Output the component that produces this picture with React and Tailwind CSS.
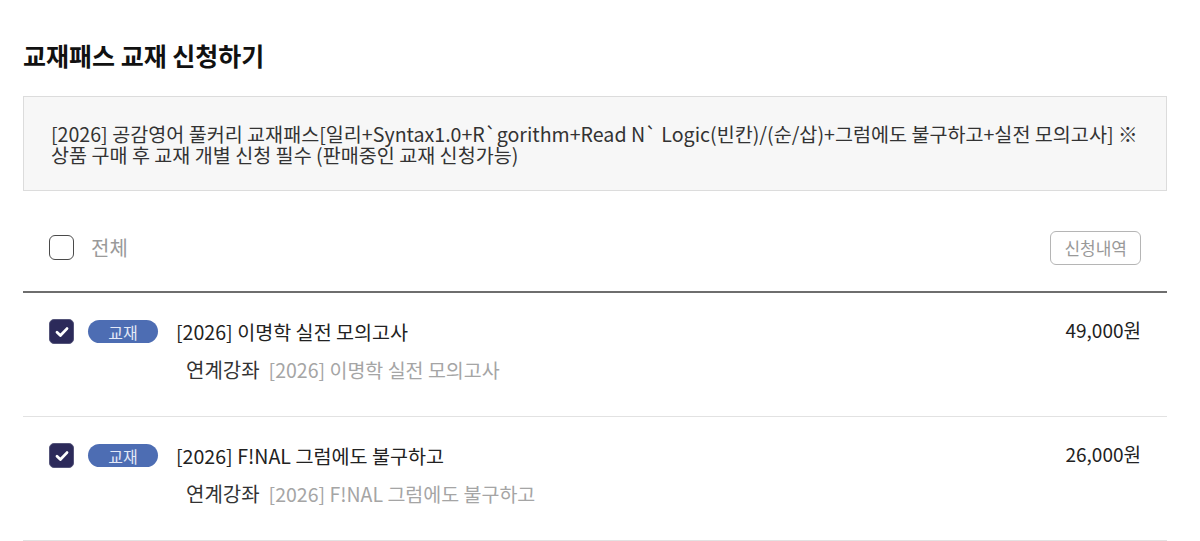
import React from "react";

const items = [
  { id: 1, title: "[2026] 이명학 실전 모의고사", lecture: "[2026] 이명학 실전 모의고사", price: "49,000원" },
  { id: 2, title: "[2026] F!NAL 그럼에도 불구하고", lecture: "[2026] F!NAL 그럼에도 불구하고", price: "26,000원" },
];

function CheckBox({ checked }) {
  if (!checked) {
    return <span className="w-[25px] h-[25px] rounded-[6px] border-[1.5px] border-[#4a4a4a] bg-white shrink-0" />;
  }
  return (
    <span className="w-[25px] h-[25px] rounded-[5px] border border-[#55557a] bg-[#2c2a5a] shrink-0 flex items-center justify-center">
      <svg width="16" height="16" viewBox="0 0 16 16" fill="none">
        <path d="M3 8.3 L6.4 11.5 L13 4.6" stroke="white" strokeWidth="2.8" strokeLinecap="round" strokeLinejoin="round" />
      </svg>
    </span>
  );
}

export default function App() {
  return (
    <div
      className="w-[1200px] h-[541px] bg-white overflow-hidden pl-[23px] pr-[33px] text-[#222]"
      style={{ fontFamily: '"Noto Sans CJK KR", "Noto Sans", sans-serif' }}
    >
      <h1 className="pt-[39px] text-[25px] leading-[33px] font-bold text-[#111]">
        교재패스 교재 신청하기
      </h1>

      {/* notice box */}
      <div className="mt-[24px] h-[95px] border border-[#dcdcdc] bg-[#f7f7f7] flex items-center px-[27px]">
        <p className="text-[19.6px] leading-[21px] text-[#333] whitespace-nowrap">
          [2026] 공감영어 풀커리 교재패스[일리+Syntax1.0+R`gorithm+Read N` Logic(빈칸)/(순/삽)+그럼에도 불구하고+실전 모의고사] ※
          <br />
          상품 구매 후 교재 개별 신청 필수 (판매중인 교재 신청가능)
        </p>
      </div>

      {/* select all */}
      <div className="h-[100px] pt-[13px] flex items-center justify-between px-[26px]">
        <div className="flex items-center gap-[17px]">
          <CheckBox checked={false} />
          <span className="text-[20px] text-[#9a9a9a]">전체</span>
        </div>
        <button
          type="button"
          className="h-[34px] px-[13px] rounded-[6px] border border-[#b5b5b5] text-[17px] text-[#999] leading-none"
        >
          신청내역
        </button>
      </div>

      <div className="border-t-2 border-[#6e6e6e]" />

      {items.map((it) => (
        <div key={it.id} className="h-[124px] border-b border-[#e2e2e2] pt-[26px] px-[26px]">
          <div className="flex items-center h-[25px]">
            <CheckBox checked />
            <span className="ml-[14px] w-[70px] h-[23px] rounded-full bg-[#4d6db3] text-[#e3e9f7] text-[16px] leading-none flex items-center justify-center">
              교재
            </span>
            <span className="ml-[18px] text-[19.6px] leading-[25px] text-[#222]">{it.title}</span>
            <span className="ml-auto text-[19px] leading-[25px] text-[#222] -mt-[4px]">{it.price}</span>
          </div>
          <div className="mt-[12px] ml-[137px] flex items-center gap-[9px] leading-[27px]">
            <span className="text-[20px] text-[#333]">연계강좌</span>
            <span className="text-[19.5px] text-[#a5a5a5]">{it.lecture}</span>
          </div>
        </div>
      ))}
    </div>
  );
}
